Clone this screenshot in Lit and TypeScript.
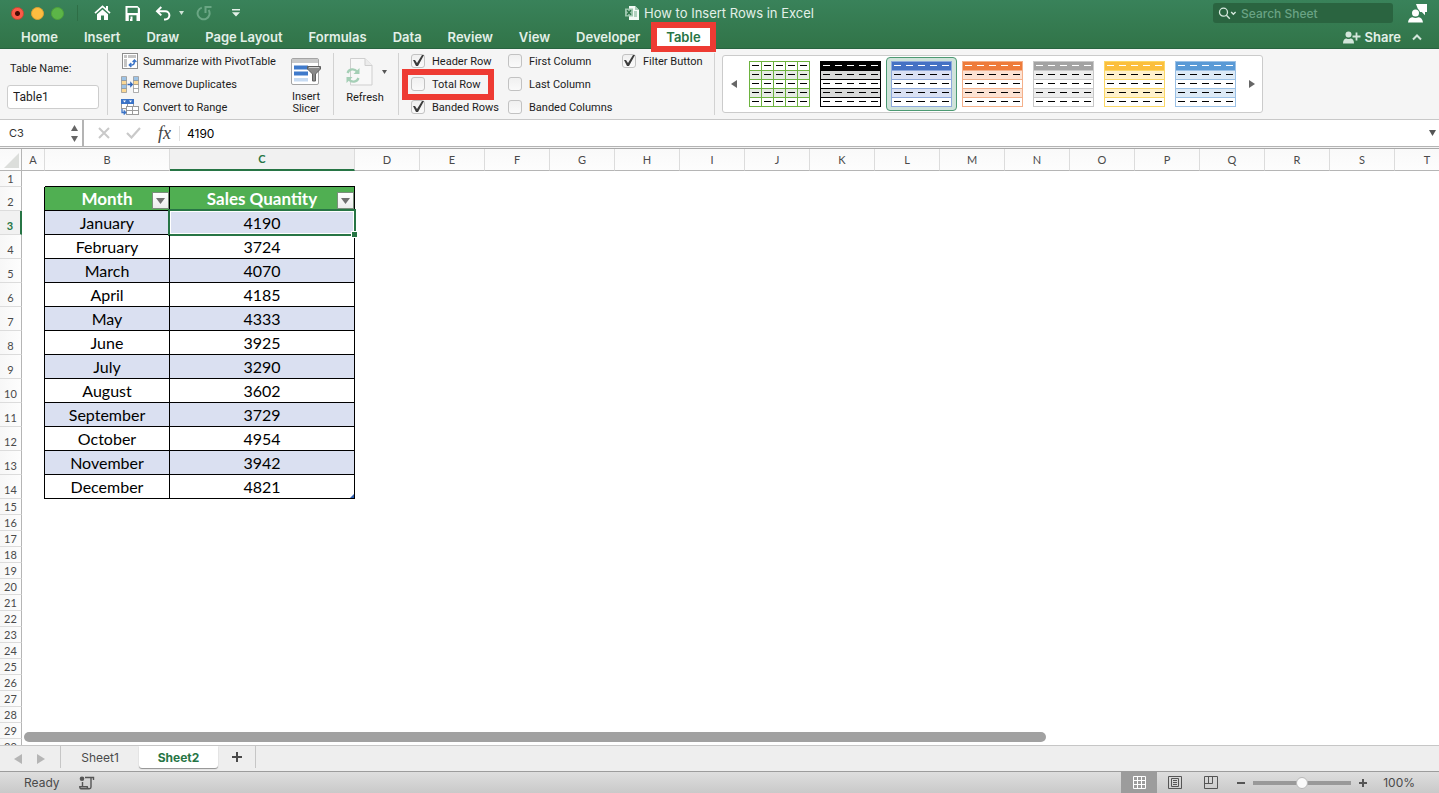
import { LitElement, html, css, svg, nothing } from "lit";
import { customElement, property, state } from "lit/decorators.js";
import { classMap } from "lit/directives/class-map.js";

const TABS = ["Home", "Insert", "Draw", "Page Layout", "Formulas", "Data", "Review", "View", "Developer", "Table"];

const SALES: [string, number][] = [
  ["January", 4190],
  ["February", 3724],
  ["March", 4070],
  ["April", 4185],
  ["May", 4333],
  ["June", 3925],
  ["July", 3290],
  ["August", 3602],
  ["September", 3729],
  ["October", 4954],
  ["November", 3942],
  ["December", 4821],
];

const COLUMNS = "ABCDEFGHIJKLMNOPQRST".split("");
const ROW_COUNT = 30;
const HEADER_ROW = 2;
const LAST_ROW = HEADER_ROW + SALES.length;

interface Theme {
  name: string;
  head: string;
  line: string;
  band: string;
  dash: string;
  columns?: boolean;
}

const THEMES: Theme[] = [
  { name: "Green grid", head: "#ffffff", line: "#6db33f", band: "#e6ebe4", dash: "#000000", columns: true },
  { name: "Black", head: "#000000", line: "#000000", band: "#d9dad9", dash: "#ffffff" },
  { name: "Blue", head: "#4472c4", line: "#8ea9db", band: "#dae1f3", dash: "#ffffff" },
  { name: "Orange", head: "#ee7b3a", line: "#f4b08a", band: "#fce2d3", dash: "#ffffff" },
  { name: "Gray", head: "#a3a3a3", line: "#c9c9c9", band: "#ededed", dash: "#ffffff" },
  { name: "Gold", head: "#fbbf3d", line: "#fbd866", band: "#fff1cb", dash: "#ffffff" },
  { name: "Light blue", head: "#5a9ad6", line: "#9bc1e6", band: "#ddeaf6", dash: "#ffffff" },
];

const OPTIONS: { id: string; label: string; on: boolean; marked?: boolean }[][] = [
  [
    { id: "header-row", label: "Header Row", on: true },
    { id: "total-row", label: "Total Row", on: false, marked: true },
    { id: "banded-rows", label: "Banded Rows", on: true },
  ],
  [
    { id: "first-column", label: "First Column", on: false },
    { id: "last-column", label: "Last Column", on: false },
    { id: "banded-columns", label: "Banded Columns", on: false },
  ],
  [{ id: "filter-button", label: "Filter Button", on: true }],
];

const controls = css`
  :host,
  * {
    box-sizing: border-box;
  }
  button {
    appearance: none;
    border: 0;
    margin: 0;
    padding: 0;
    background: none;
    color: inherit;
    font: inherit;
    display: flex;
    align-items: center;
    justify-content: center;
  }
  input {
    appearance: none;
    margin: 0;
    padding: 0;
    border: 0;
    border-radius: 0;
    background: none;
    color: inherit;
    font: inherit;
    min-width: 0;
  }
  svg {
    display: block;
    flex: none;
  }
`;

@customElement("title-bar")
class TitleBar extends LitElement {
  static styles = [
    controls,
    css`
      :host {
        display: block;
        background: linear-gradient(#39825a, #317448);
        border-bottom: 1px solid #286340;
        color: #e3f0e8;
      }
      .top {
        display: grid;
        grid-template-columns: 1fr auto 1fr;
        align-items: center;
        height: 26px;
      }
      .left {
        display: flex;
        align-items: center;
        padding-left: 11px;
      }
      .lights {
        display: flex;
        gap: 7px;
        padding-right: 13px;
        border-right: 1px solid #2e6e46;
        height: 16px;
        align-items: center;
      }
      .light {
        width: 13px;
        height: 13px;
        border-radius: 50%;
        border: 1px solid #d04532;
        background: #fb5b48;
      }
      .red {
        background: radial-gradient(circle, #4a0b05 0 2px, #fb5b48 3px);
      }
      .amber {
        border-color: #dfa033;
        background: #fdbd40;
      }
      .green {
        border-color: #4fa23b;
        background: #5cb548;
      }
      .quick {
        display: flex;
        align-items: center;
        padding-left: 16px;
      }
      .home {
        margin-right: 14px;
      }
      .save {
        margin-right: 15px;
      }
      .undo {
        margin-right: 7px;
      }
      .caret {
        margin-right: 12px;
      }
      .redo {
        margin-right: 19px;
      }
      .title {
        display: flex;
        align-items: center;
        gap: 5px;
        font-size: 13px;
        font-weight: 400;
        line-height: 16px;
        margin: 0;
      }
      .right {
        display: flex;
        align-items: center;
        justify-content: flex-end;
        gap: 15px;
        padding-right: 12px;
      }
      .search {
        display: flex;
        align-items: center;
        gap: 4px;
        width: 180px;
        height: 20px;
        padding-left: 5px;
        border-radius: 3px;
        background: #2a6440;
        font-size: 12px;
        font-weight: 500;
      }
      .search input {
        flex: 1;
      }
      .search input::placeholder {
        color: #69a384;
        opacity: 1;
      }
      .tabs {
        display: flex;
        align-items: center;
        height: 22px;
        padding: 0 17px 0 12px;
        gap: 8px;
        font-size: 13px;
        font-weight: 600;
        line-height: 18px;
      }
      .tab {
        padding: 0 9px;
        height: 18px;
      }
      .active {
        position: relative;
        z-index: 2;
        background: #ffffff;
        color: #277545;
        outline: 6px solid #ee3b33;
      }
      .share {
        margin-left: auto;
        gap: 4px;
      }
      .chevron {
        margin-left: 3px;
      }
    `,
  ];

  @state() private active = "Table";

  render() {
    return html`
      <div class="top">
        <div class="left">
          <div class="lights">
            <span class="light red"></span><span class="light amber"></span><span class="light green"></span>
          </div>
          <div class="quick">
            <button class="home" aria-label="Home">
              <svg width="17" height="16" viewBox="0 0 17 16">
                <path d="M1 8.2 8.5 1.4 16 8.2" fill="none" stroke="#fff" stroke-width="1.7" />
                <path d="M12 1h2v5l-2-2z" fill="#fff" />
                <path d="M8.5 4.4 14 9.3V15h-4v-4.500H7V15H3V9.300z" fill="#fff" />
              </svg>
            </button>
            <button class="save" aria-label="Save">
              <svg width="15" height="15" viewBox="0 0 15 15">
                <path
                  fill-rule="evenodd"
                  d="M.5 0H12.5L15 2.5V15H.5zM2.5 1.7V7H12.8V1.7zM3.8 9.3V15H5V13H7.5V15H11.5V9.3z"
                  fill="#fff"
                />
                <path d="M5.5 10.5h2V13h-2z" fill="#fff" />
              </svg>
            </button>
            <button class="undo" aria-label="Undo">
              <svg width="17" height="15" viewBox="0 0 17 15">
                <path d="M6.3 1 2 5.2l4.3 4.2M2 5.2h8.3a4 4 0 0 1 0 8.2H9" fill="none" stroke="#fff" stroke-width="2" />
              </svg>
            </button>
            <button class="caret" aria-label="Undo history">
              <svg width="5" height="4" viewBox="0 0 5 4"><path d="M0 0h5L2.5 4z" fill="#cfe3d7" /></svg>
            </button>
            <button class="redo" aria-label="Redo">
              <svg width="17" height="16" viewBox="0 0 17 16">
                <path d="M5.800 2.600A6 6 0 1 0 12.600 5" fill="none" stroke="#6aa684" stroke-width="2" />
                <path d="M9.500 8V2H15.500" fill="none" stroke="#6aa684" stroke-width="2" />
              </svg>
            </button>
            <button aria-label="Customize toolbar">
              <svg width="8" height="8" viewBox="0 0 8 8">
                <path d="M0 0h8v1.4H0zM0 3.2h8L4 7.6z" fill="#e3f0e8" />
              </svg>
            </button>
          </div>
        </div>
        <h1 class="title">
          <svg width="14" height="14" viewBox="0 0 14 14">
            <path d="M4 0h6l4 4v10H4z" fill="#f4faf6" />
            <path d="M10 0v4h4z" fill="#a9cdb8" />
            <path d="M9 6h3M9 8h3M9 10h3" stroke="#6da886" />
            <path d="M0 2.5h8v8H0z" fill="#9cc6ad" />
            <path d="m2 4.2 4 4.6m0-4.6L2 8.8" stroke="#2c7247" stroke-width="1.3" />
          </svg>
          How to Insert Rows in Excel
        </h1>
        <div class="right">
          <label class="search">
            <svg width="19" height="13" viewBox="0 0 19 13">
              <circle cx="5.5" cy="5.2" r="4" fill="none" stroke="#d6e8dd" stroke-width="1.3" />
              <path d="m8.4 8.2 3.4 3.6M13.2 5l2.2 2.2L17.6 5" fill="none" stroke="#d6e8dd" stroke-width="1.4" />
            </svg>
            <input type="search" placeholder="Search Sheet" aria-label="Search Sheet" />
          </label>
          <button aria-label="Feedback">
            <svg width="19" height="19" viewBox="0 0 19 19">
              <path d="M8 0h11v8h-2v3.2L13.8 8H11z" fill="#fff" />
              <circle cx="7.5" cy="9" r="4.6" fill="#37805a" />
              <circle cx="7.5" cy="9" r="3.5" fill="#fff" />
              <path d="M0 18.5c.2-3.5 2.5-5.2 4.7-5.2 1.6 1 4 1 5.6 0 2.2 0 4.4 1.700 4.700 5.200z" fill="#fff" />
            </svg>
          </button>
        </div>
      </div>
      <nav class="tabs">
        ${TABS.map(
          (t) => html`<button class=${classMap({ tab: true, active: t === this.active })} @click=${() => (this.active = t)}>${t}</button>`
        )}
        <button class="share">
          <svg width="18" height="13" viewBox="0 0 18 13">
            <circle cx="5.5" cy="3.6" r="3" fill="#d3e6db" />
            <path d="M0 12.5c0-3.5 1.5-5 3.5-5 1.3.8 2.7.8 4 0 2 0 3.5 1.5 3.5 5z" fill="#d3e6db" />
            <path d="M13.5 1.5v8M9.5 5.5h8" stroke="#d3e6db" stroke-width="1.8" />
          </svg>
          Share
        </button>
        <button class="chevron" aria-label="Collapse ribbon">
          <svg width="10" height="7" viewBox="0 0 10 7">
            <path d="m1 5.5 4-4 4 4" fill="none" stroke="#d3e6db" stroke-width="2" />
          </svg>
        </button>
      </nav>
    `;
  }
}

@customElement("style-thumb")
class StyleThumb extends LitElement {
  static styles = css`
    :host {
      display: block;
    }
    svg {
      display: block;
    }
  `;

  @property({ attribute: false }) theme!: Theme;

  render() {
    const t = this.theme;
    const steps = [0, 1, 2, 3, 4, 5];
    return html`
      <svg width="61" height="46" viewBox="0 0 61 46" shape-rendering="crispEdges">
        <rect width="61" height="46" fill="#fff" />
        <rect width="61" height="9" fill=${t.head} />
        <rect y="9" width="61" height="9" fill=${t.band} />
        <rect y="27" width="61" height="9" fill=${t.band} />
        ${steps.map((i) => svg`<rect y=${i * 9} width="61" height="1" fill=${t.line} />`)}
        ${steps.map((i) => (t.columns || i === 0 || i === 5 ? svg`<rect x=${i * 12} width="1" height="46" fill=${t.line} />` : nothing))}
        ${t.columns ? nothing : svg`<rect x="1" y="1" width="59" height="8" fill=${t.head} />`}
        ${steps.slice(0, 5).map((r) =>
          steps.slice(0, 5).map((c) => svg`<rect x=${3 + c * 12} y=${4 + r * 9} width="7" height="1" fill=${r === 0 ? t.dash : "#000"} />`)
        )}
      </svg>
    `;
  }
}

@customElement("table-ribbon")
class TableRibbon extends LitElement {
  static styles = [
    controls,
    css`
      :host {
        display: flex;
        align-items: center;
        height: 71px;
        padding-left: 7px;
        background: #f5f5f5;
        border-bottom: 1px solid #c8c8c8;
        color: #1c1c1c;
        font-family: Roboto, "Open Sans", sans-serif;
        font-size: 11px;
        line-height: 13px;
        white-space: nowrap;
      }
      .rule {
        width: 1px;
        height: 62px;
        background: #d2d2d2;
        flex: none;
      }
      .name {
        display: flex;
        flex-direction: column;
        gap: 10px;
        width: 92px;
        margin-right: 8px;
        padding-top: 2px;
      }
      .name span {
        padding-left: 3px;
      }
      .name input {
        width: 100%;
        height: 24px;
        padding: 0 5px;
        border: 1px solid #cdcdcd;
        border-radius: 3px;
        background: #fff;
        font-size: 12px;
      }
      .actions {
        display: flex;
        flex-direction: column;
        width: 171px;
        padding-left: 13px;
      }
      .action {
        height: 23px;
        gap: 4px;
        justify-content: flex-start;
      }
      .slicer {
        flex-direction: column;
        gap: 5px;
        width: 54px;
        line-height: 12px;
        padding-top: 4px;
      }
      .refresh {
        display: flex;
        align-items: flex-start;
        width: 64px;
        height: 62px;
        padding: 5px 0 0 11px;
      }
      .refresh .big {
        flex-direction: column;
        gap: 5px;
        width: 40px;
      }
      .refresh .big svg {
        align-self: flex-start;
      }
      .refresh .more {
        width: 5px;
        margin: 12px 0 0 -3px;
      }
      .options {
        display: flex;
        padding-left: 9px;
        height: 69px;
      }
      .group {
        display: flex;
        flex-direction: column;
        gap: 4px;
        padding-top: 2px;
        width: 97px;
      }
      .group.wide {
        width: 114px;
      }
      .group.last {
        width: 95px;
      }
      .option {
        display: flex;
        align-items: center;
        align-self: flex-start;
        gap: 7px;
        height: 19px;
        padding: 0 7px 0 3px;
      }
      .marked {
        position: relative;
        z-index: 1;
        background: #f5f5f5;
        outline: 6px solid #ee3b33;
      }
      .option input {
        width: 14px;
        height: 14px;
        border: 1px solid #c2c2c2;
        border-radius: 3px;
        background: linear-gradient(#f0f0f0, #fafafa);
      }
      .option input:checked::before {
        content: "";
        display: block;
        width: 12px;
        height: 12px;
        background: #3c3c3c;
        clip-path: polygon(1px 5px, 3px 5px, 5px 8px, 10px 0, 12px 0, 6px 11px, 4px 11px);
      }
      .gallery {
        display: flex;
        align-items: center;
        height: 58px;
        margin-left: 7px;
        border: 1px solid #cbcbcb;
        border-radius: 3px;
        background: #fff;
      }
      .arrow {
        width: 21px;
        height: 50px;
      }
      .pick {
        width: 71px;
        height: 54px;
        border: 1px solid transparent;
        border-radius: 4px;
      }
      .chosen {
        border-color: #4c9a73;
        background: #cfe3da;
      }
    `,
  ];

  @state() private chosen = 2;

  render() {
    return html`
      <label class="name"><span>Table Name:</span><input .value=${"Table1"} /></label>
      <span class="rule"></span>
      <div class="actions">
        <button class="action">
          <svg width="18" height="17" viewBox="0 0 18 17">
            <rect x="1.5" y=".5" width="15" height="15" fill="#fff" stroke="#8d8d8d" />
            <path d="M3 2h3v3H3zM7 2h8v3H7zM3 6h3v8H3z" fill="#c4c4c4" />
            <path d="M8.5 12h2.5q2.5 0 2.5-4.5M10.3 10 8.3 12l2 2M11.6 9l1.9-2 1.9 2" fill="none" stroke="#3b73c6" stroke-width="1.4" />
          </svg>
          Summarize with PivotTable
        </button>
        <button class="action">
          <svg width="18" height="17" viewBox="0 0 18 17">
            <path d="M.5 1h5v4h-5zM12.5 1h5v4h-5z" fill="#9dc3e6" />
            <path d="M.5 5h5v4h-5zM.5 13h5v3.5h-5z" fill="#fbd894" />
            <path d="M.5 9h5v4h-5z" fill="#9dc3e6" />
            <path d="M12.5 5h5v4h-5z" fill="#fbd894" />
            <path d="M12.5 9h5v7.5h-5z" fill="#fff" />
            <path d="M.5.5h5v16h-5zM12.5.5h5v16h-5zM.5 4.5h5m-5 4h5m-5 4h5m7-8h5m-5 4h5m-5 4h5" fill="none" stroke="#8d8d8d" stroke-opacity=".7" />
            <path d="M6.5 7.7h2.7V5.2l3 3.3-3 3.3V9.3H6.5z" fill="#2f66bb" />
          </svg>
          Remove Duplicates
        </button>
        <button class="action">
          <svg width="18" height="17" viewBox="0 0 18 17">
            <rect x=".5" y=".5" width="12" height="9" fill="#fff" stroke="#9a9a9a" />
            <path d="M0 0h13v5H0z" fill="#3b73c6" />
            <path d="M2 1.5h3L3.5 3.5zM8 1.5h3L9.5 3.5z" fill="#fff" />
            <path d="M6.5 5v4" stroke="#9a9a9a" />
            <rect x="5.5" y="7.5" width="12" height="8" fill="#fff" stroke="#9a9a9a" />
            <path d="M11.5 7.5v8M5.5 11.5h12" stroke="#9a9a9a" />
            <path d="M1 10v3.5h3M2.7 11.5l2 2-2 2" fill="none" stroke="#3b73c6" stroke-width="1.3" />
          </svg>
          Convert to Range
        </button>
      </div>
      <button class="slicer">
        <svg width="31" height="28" viewBox="0 0 31 28">
          <rect x=".5" y=".5" width="27" height="26" rx="1.5" fill="#fff" stroke="#a5a5a5" />
          <path d="M1 1h26v4H1z" fill="#c9c9c9" />
          <path d="M3 7.5h14v4H3zM3 13.5h14v4H3z" fill="#3f7acb" />
          <path d="M3 20h14v3.5H3z" fill="#c7dbf2" />
          <path d="M16.5 8.5h13v2.5l-5 5v7h-3v-7l-5-5z" fill="#8a8a8a" stroke="#5f5f5f" />
          <path d="M18 9.5h10" stroke="#cfcfcf" />
        </svg>
        <span>Insert<br />Slicer</span>
      </button>
      <span class="rule"></span>
      <div class="refresh">
        <button class="big">
          <svg width="29" height="28" viewBox="0 0 29 28">
            <path d="M5.5.5H20l7 7V27H5.5z" fill="#f8f8f8" stroke="#cfcfcf" />
            <path d="M20 .5v7h7" fill="#ececec" stroke="#cfcfcf" />
            <path d="M2.5 15A5.5 5.5 0 0 1 12 13.5M13.5 20A5.5 5.5 0 0 1 4 21.5" fill="none" stroke="#a5cfb6" stroke-width="2.2" />
            <path d="M14.5 10v6H8.5zM1.5 25v-6h6z" fill="#a5cfb6" />
          </svg>
          Refresh
        </button>
        <button class="more" aria-label="Refresh options">
          <svg width="5" height="4" viewBox="0 0 5 4"><path d="M0 0h5L2.5 4z" fill="#555" /></svg>
        </button>
      </div>
      <span class="rule"></span>
      <div class="options">
        ${OPTIONS.map(
          (group, i) => html`
            <div class=${classMap({ group: true, wide: i === 1, last: i === 2 })}>
              ${group.map(
                (o) => html`
                  <label class=${classMap({ option: true, marked: !!o.marked })} for=${o.id}>
                    <input type="checkbox" id=${o.id} .checked=${o.on} />${o.label}
                  </label>
                `
              )}
            </div>
          `
        )}
      </div>
      <span class="rule"></span>
      <div class="gallery">
        <button class="arrow" aria-label="Previous styles">
          <svg width="6" height="8" viewBox="0 0 6 8"><path d="M6 0v8L0 4z" fill="#666" /></svg>
        </button>
        ${THEMES.map(
          (t, i) => html`
            <button class=${classMap({ pick: true, chosen: i === this.chosen })} aria-label=${t.name} @click=${() => (this.chosen = i)}>
              <style-thumb .theme=${t}></style-thumb>
            </button>
          `
        )}
        <button class="arrow" aria-label="Next styles">
          <svg width="6" height="8" viewBox="0 0 6 8"><path d="M0 0v8l6-4z" fill="#666" /></svg>
        </button>
      </div>
    `;
  }
}

@customElement("formula-bar")
class FormulaBar extends LitElement {
  static styles = [
    controls,
    css`
      :host {
        display: flex;
        align-items: center;
        height: 29px;
        padding: 0 3px 2px 0;
        background: #fff;
        border-bottom: 1px solid #a9a9a9;
        box-shadow: inset 0 -1px #f4f4f4, inset 0 -2px #b4b4b4;
        font-size: 12px;
      }
      .cell {
        display: flex;
        align-items: center;
        width: 84px;
        height: 26px;
        padding: 0 4px 0 9px;
        border-right: 2px solid #b4b4b4;
        font-size: 11px;
        color: #333;
      }
      .cell input {
        flex: 1;
      }
      .steps {
        display: flex;
        flex-direction: column;
        gap: 5px;
      }
      .cancel {
        margin-left: 14px;
      }
      .accept {
        margin-left: 16px;
      }
      .fx {
        margin-left: 16px;
        width: 15px;
        color: #444;
        font-family: "Liberation Serif", serif;
        font-style: italic;
        font-size: 18px;
        line-height: 20px;
      }
      .formula {
        flex: 1;
        height: 15px;
        margin-left: 7px;
        padding-left: 7px;
        border-left: 1px solid #e0e0e0;
        color: #000;
      }
    `,
  ];

  render() {
    return html`
      <div class="cell">
        <input .value=${"C3"} aria-label="Name box" />
        <div class="steps">
          <button aria-label="Previous name">
            <svg width="7" height="6" viewBox="0 0 7 6"><path d="M3.5 0 7 6H0z" fill="#666" /></svg>
          </button>
          <button aria-label="Next name">
            <svg width="7" height="6" viewBox="0 0 7 6"><path d="M0 0h7L3.5 6z" fill="#666" /></svg>
          </button>
        </div>
      </div>
      <button class="cancel" aria-label="Cancel">
        <svg width="12" height="12" viewBox="0 0 12 12"><path d="m1 1 10 10M11 1 1 11" stroke="#c9c9c9" stroke-width="2" /></svg>
      </button>
      <button class="accept" aria-label="Accept">
        <svg width="15" height="12" viewBox="0 0 15 12">
          <path d="m1 6 4.5 4.5L14 1" fill="none" stroke="#c9c9c9" stroke-width="2.2" />
        </svg>
      </button>
      <button class="fx" aria-label="Insert function">fx</button>
      <input class="formula" .value=${"4190"} aria-label="Formula" />
      <button aria-label="Expand formula bar">
        <svg width="7" height="6" viewBox="0 0 7 6"><path d="M0 0h7L3.5 6z" fill="#555" /></svg>
      </button>
    `;
  }
}

@customElement("sheet-grid")
class SheetGrid extends LitElement {
  static styles = [
    controls,
    css`
      :host {
        display: block;
        position: relative;
        overflow: hidden;
        background: #fff;
        font-family: Lato, "Noto Sans", sans-serif;
      }
      table {
        table-layout: fixed;
        width: 0;
        border-collapse: separate;
        border-spacing: 0;
      }
      .c-head {
        width: 22px;
      }
      .c-a {
        width: 23px;
      }
      .c-b {
        width: 125px;
      }
      .c-c {
        width: 185px;
      }
      .c-x {
        width: 65px;
      }
      th,
      td {
        padding: 0;
        text-align: center;
        font-weight: 400;
      }
      thead th {
        height: 22px;
        border-right: 1px solid #dcdcdc;
        border-bottom: 1px solid #b5b5b5;
        background: linear-gradient(#f9f9f9, #fdfdfd);
        color: #4a4a4a;
        font-size: 11px;
        line-height: 14px;
      }
      thead th.corner,
      tbody th {
        border-right: 1px solid #b5b5b5;
      }
      .corner svg {
        margin: 2px 0 0 4px;
      }
      thead th.sel {
        border-bottom: 2px solid #277545;
        background: #f1f1f1;
        color: #277545;
        font-weight: 700;
      }
      tbody th {
        height: 16px;
        border-bottom: 1px solid #dcdcdc;
        background: linear-gradient(90deg, #f7f7f7, #fdfdfd);
        color: #4a4a4a;
        font-size: 11px;
        line-height: 14px;
        vertical-align: bottom;
      }
      tbody th.sel {
        border-right: 2px solid #277545;
        background: #f1f1f1;
        color: #277545;
        font-weight: 700;
      }
      .tall th {
        height: 24px;
        padding-bottom: 1px;
      }
      .edge-r {
        border-right: 1px solid #000;
      }
      .edge-b {
        border-bottom: 1px solid #000;
      }
      .data {
        position: relative;
        border-right: 1px solid #000;
        border-bottom: 1px solid #000;
        color: #000;
        font-size: 16px;
        line-height: 22px;
      }
      .band {
        background: #dae0f1;
      }
      .head {
        background: #50af52;
        color: #fff;
        font-size: 17px;
        font-weight: 700;
      }
      .filter {
        position: absolute;
        right: 0;
        bottom: 1px;
        width: 17px;
        height: 17px;
        border: 1px solid #7a8f7b;
        background: linear-gradient(#fff, #ececec);
      }
      .selection {
        position: absolute;
        inset: -2px;
        border: 2px solid #277545;
        box-shadow: inset 0 0 0 1px #fff;
      }
      .handle {
        position: absolute;
        right: -4px;
        bottom: -4px;
        width: 7px;
        height: 7px;
        border: 1px solid #fff;
        background: #277545;
        z-index: 1;
      }
      .corner-mark {
        position: absolute;
        right: 0;
        bottom: 0;
        width: 4px;
        height: 4px;
        background: #2f5fb0;
        clip-path: polygon(100% 0, 100% 100%, 0 100%);
      }
      .scroll {
        position: absolute;
        left: 24px;
        bottom: 3px;
        width: 71%;
        height: 10px;
        border-radius: 5px;
        background: #a1a1a1;
      }
    `,
  ];

  private head(label: string) {
    return html`<td class="data head">
      ${label}
      <button class="filter" aria-label=${"Filter " + label}>
        <svg width="9" height="6" viewBox="0 0 9 6"><path d="M0 0h9L4.5 6z" fill="#707070" /></svg>
      </button>
    </td>`;
  }

  private cells(row: number) {
    if (row === 1) return html`<td></td><td class="edge-b"></td><td class="edge-b"></td>`;
    if (row === HEADER_ROW) return html`<td class="edge-r"></td>${this.head("Month")}${this.head("Sales Quantity")}`;
    if (row > LAST_ROW) return html`<td></td><td></td><td></td>`;
    const [month, quantity] = SALES[row - HEADER_ROW - 1];
    const cls = classMap({ data: true, band: row % 2 === 1 });
    return html`
      <td class="edge-r"></td>
      <td class=${cls}>${month}</td>
      <td class=${cls}>
        ${quantity}
        ${row === 3 ? html`<span class="selection"></span><span class="handle"></span>` : nothing}
        ${row === LAST_ROW ? html`<span class="corner-mark"></span>` : nothing}
      </td>
    `;
  }

  render() {
    const rows = Array.from({ length: ROW_COUNT }, (_, i) => i + 1);
    return html`
      <table>
        <colgroup>
          <col class="c-head" />
          ${COLUMNS.map((c) => html`<col class=${c === "A" ? "c-a" : c === "B" ? "c-b" : c === "C" ? "c-c" : "c-x"} />`)}
        </colgroup>
        <thead>
          <tr>
            <th class="corner">
              <svg width="15" height="15" viewBox="0 0 15 15"><path d="M15 0v15H0z" fill="#dcdedb" /></svg>
            </th>
            ${COLUMNS.map((c) => html`<th scope="col" class=${classMap({ sel: c === "C" })}>${c}</th>`)}
          </tr>
        </thead>
        <tbody>
          ${rows.map(
            (r) => html`
              <tr class=${classMap({ tall: r >= HEADER_ROW && r <= LAST_ROW })}>
                <th scope="row" class=${classMap({ sel: r === 3 })}>${r}</th>
                ${this.cells(r)}
              </tr>
            `
          )}
        </tbody>
      </table>
      <span class="scroll"></span>
    `;
  }
}

@customElement("sheet-footer")
class SheetFooter extends LitElement {
  static styles = [
    controls,
    css`
      :host {
        display: block;
        color: #4a4a4a;
        font-size: 12px;
      }
      .sheets {
        display: flex;
        align-items: flex-start;
        height: 27px;
        padding-left: 14px;
        border-top: 1px solid #c6c6c6;
        border-bottom: 1px solid #9c9c9c;
        background: #eeeeee;
      }
      .step {
        width: 8px;
        height: 26px;
        margin-right: 15px;
      }
      .sheet {
        width: 79px;
        height: 22px;
        border-left: 1px solid #c6c6c6;
      }
      .current {
        border-radius: 0 0 3px 3px;
        background: #fff;
        color: #277545;
        font-weight: 700;
        box-shadow: 0 1px 1px #8f8f8f;
        border-left: 0;
      }
      .add {
        width: 38px;
        height: 22px;
        border-right: 1px solid #c6c6c6;
      }
      .status {
        display: flex;
        align-items: center;
        height: 21px;
        padding: 0 24px;
        background: linear-gradient(#dedede, #c9c9c9);
        white-space: nowrap;
      }
      .macro {
        margin-left: 19px;
      }
      .views {
        display: flex;
        margin-left: auto;
        height: 100%;
      }
      .view {
        width: 36px;
      }
      .on {
        background: #9c9c9c;
      }
      .minus {
        margin: 0 8px;
      }
      .plus {
        margin: 0 16px 0 8px;
      }
      .zoom {
        width: 98px;
        height: 14px;
        background: linear-gradient(#999, #999) center / 100% 4px no-repeat;
      }
      .zoom::-webkit-slider-thumb {
        appearance: none;
        width: 12px;
        height: 12px;
        border: 1px solid #b8b8b8;
        border-radius: 50%;
        background: #fafafa;
      }
    `,
  ];

  render() {
    return html`
      <nav class="sheets">
        <button class="step" aria-label="Previous sheet">
          <svg width="8" height="10" viewBox="0 0 8 10"><path d="M8 0v10L0 5z" fill="#b5b5b5" /></svg>
        </button>
        <button class="step" aria-label="Next sheet">
          <svg width="8" height="10" viewBox="0 0 8 10"><path d="M0 0v10l8-5z" fill="#b5b5b5" /></svg>
        </button>
        <button class="sheet">Sheet1</button>
        <button class="sheet current">Sheet2</button>
        <button class="add" aria-label="Add sheet">
          <svg width="10" height="10" viewBox="0 0 10 10"><path d="M5 0v10M0 5h10" stroke="#4a4a4a" stroke-width="2" /></svg>
        </button>
      </nav>
      <div class="status">
        <span>Ready</span>
        <button class="macro" aria-label="Record macro">
          <svg width="16" height="14" viewBox="0 0 16 14">
            <circle cx="3" cy="2.8" r="2.3" fill="#555" />
            <path d="M6 1.5h8.5v2.5M12 1.5V11q0 1.7-1.7 1.700H2q-1.200 0-1.200-2h7.400q0 2 1.800 2M3.500 6v4.500" fill="none" stroke="#555" stroke-width="1.4" />
          </svg>
        </button>
        <div class="views">
          <button class="view on" aria-label="Normal view">
            <svg width="13" height="13" viewBox="0 0 13 13">
              <path d="M.5.5h12v12H.5zM4.5.5v12M8.5.5v12M.5 4.5h12M.5 8.5h12" fill="none" stroke="#fff" />
            </svg>
          </button>
          <button class="view" aria-label="Page layout view">
            <svg width="14" height="13" viewBox="0 0 14 13">
              <path d="M.5.5h13v12H.5zM3.5 2.5h7v8h-7zM5 4.5h4M5 6.5h4M5 8.5h4" fill="none" stroke="#555" />
            </svg>
          </button>
          <button class="view" aria-label="Page break view">
            <svg width="14" height="13" viewBox="0 0 14 13">
              <path d="M.5.5h13v12H.5zM.5 7.5h8v-7M4.5.5v7" fill="none" stroke="#555" />
            </svg>
          </button>
        </div>
        <button class="minus" aria-label="Zoom out">
          <svg width="8" height="8" viewBox="0 0 8 8"><path d="M0 4h8" stroke="#555" stroke-width="2" /></svg>
        </button>
        <input class="zoom" type="range" min="0" max="200" .value=${"100"} aria-label="Zoom" />
        <button class="plus" aria-label="Zoom in">
          <svg width="8" height="8" viewBox="0 0 8 8"><path d="M0 4h8M4 0v8" stroke="#555" stroke-width="2" /></svg>
        </button>
        <span>100%</span>
      </div>
    `;
  }
}

@customElement("app-root")
class AppRoot extends LitElement {
  static styles = css`
    :host {
      display: flex;
      flex-direction: column;
      height: 100vh;
      overflow: hidden;
      background: #fff;
      font-family: Inter, "Open Sans", sans-serif;
    }
    .grid {
      flex: 1;
      min-height: 0;
    }
  `;

  render() {
    return html`
      <title-bar></title-bar>
      <table-ribbon></table-ribbon>
      <formula-bar></formula-bar>
      <sheet-grid class="grid"></sheet-grid>
      <sheet-footer></sheet-footer>
    `;
  }
}
